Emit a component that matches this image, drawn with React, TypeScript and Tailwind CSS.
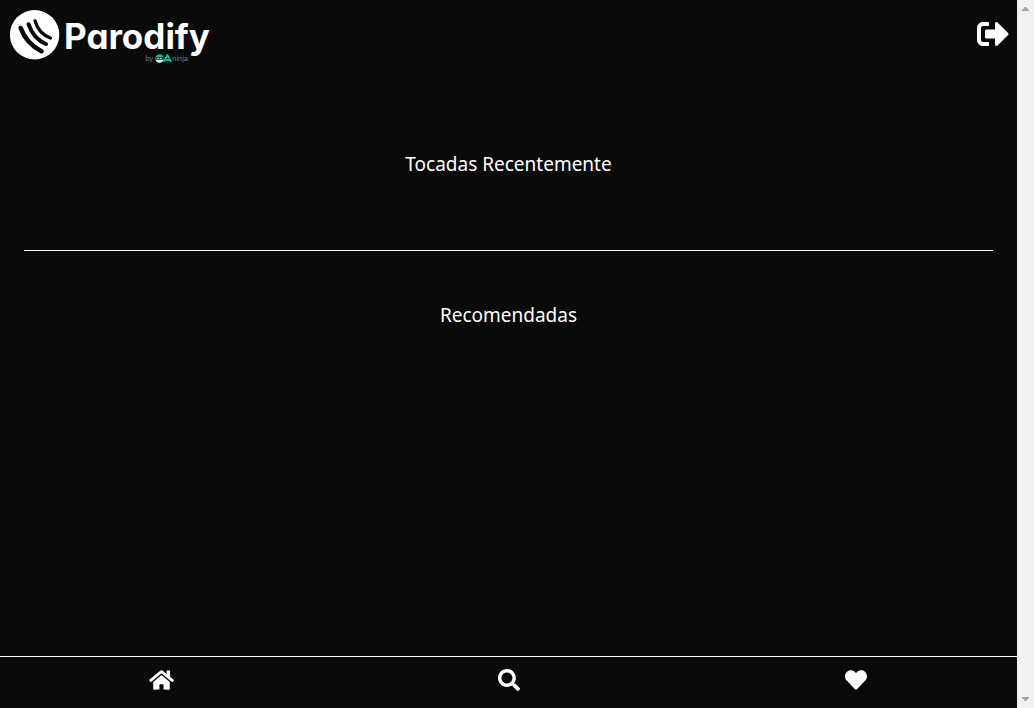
import React from "react";
import { FaHeart, FaHome, FaSearch, FaSignOutAlt } from "react-icons/fa";

function Logo() {
  return (
    <a href="#" aria-label="Parodify" className="flex items-start gap-1">
      <svg viewBox="0 0 50 50" className="size-[50px]" aria-hidden="true">
        <circle cx="24.6" cy="24.8" r="24.7" fill="#fff" />
        <g fill="none" stroke="#0a0a0a" strokeLinecap="round">
          <path d="M10.7 18C14 27 21 36 31.5 41.2" strokeWidth="4.6" />
          <path d="M18.5 14.2C21.5 23 27 30.5 36 34" strokeWidth="4" />
          <path d="M25 10.8C27 18 32 25 40.5 28" strokeWidth="3.2" />
        </g>
      </svg>
      <span className="flex flex-col pt-2 text-white">
        <span className="text-[35px] leading-9 font-bold [font-feature-settings:'cv11']">Parodify</span>
        <span className="flex items-center justify-end pr-[22px] text-[7px] leading-[8px] text-[#777777]">
          <span>by</span>
          <svg viewBox="0 0 17 9" className="ml-0.5 h-[9px] w-[17px]" aria-hidden="true">
            <circle cx="4.5" cy="4.5" r="4.2" fill="#11b991" />
            <path d="M.5 5.8h8A4.2 4.2 0 0 1 .5 5.8Z" fill="#e5e5e5" />
            <path d="M1 3.2h7v2.4H1Z" fill="#183c35" />
            <path d="M2.5 4.4h1.2M5.3 4.4h1.2" stroke="#fff" />
            <path d="m8.5 8 4-7 3.6 7M10.5 6h4" fill="none" stroke="#11b991" strokeWidth="1.8" />
          </svg>
          <span>ninja</span>
        </span>
      </span>
    </a>
  );
}

function Scrollbar() {
  return (
    <div aria-hidden="true" className="flex w-[17px] shrink-0 flex-col items-center justify-between bg-[#f1f1f1] py-[7px]">
      <svg viewBox="0 0 7 4" className="h-1 w-[7px]" fill="#a3a3a3"><path d="M3 0h1l3 3v1H0V3Z" /></svg>
      <svg viewBox="0 0 7 4" className="h-1 w-[7px]" fill="#a3a3a3"><path d="M0 0h7v1L4 4H3L0 1Z" /></svg>
    </div>
  );
}

export default function App() {
  return (
    <div className="flex h-screen bg-[#0a0a0a] font-['Inter',sans-serif] text-white">
      <div className="flex min-w-0 flex-1 flex-col overflow-hidden">
        <header className="flex items-start justify-between pt-2.5 pr-2 pl-2.5">
          <Logo />
          <button type="button" aria-label="Sair" className="mt-2">
            <FaSignOutAlt className="size-8" />
          </button>
        </header>
        <main className="flex-1 px-6 pt-[85px] text-center font-['Noto_Sans',sans-serif] text-[19px] leading-8">
          <section className="border-b border-white pb-[70px]">
            <h2>Tocadas Recentemente</h2>
          </section>
          <section className="pt-12">
            <h2>Recomendadas</h2>
          </section>
        </main>
        <nav className="h-[52px] shrink-0 border-t border-white pt-3">
          <div className="-mx-3 grid grid-cols-3 justify-items-center">
            <a href="#" aria-label="Início"><FaHome className="h-[22px] w-[25px]" /></a>
            <a href="#" aria-label="Buscar"><FaSearch className="size-[22px]" /></a>
            <a href="#" aria-label="Favoritas"><FaHeart className="size-[22px]" /></a>
          </div>
        </nav>
      </div>
      <Scrollbar />
    </div>
  );
}
